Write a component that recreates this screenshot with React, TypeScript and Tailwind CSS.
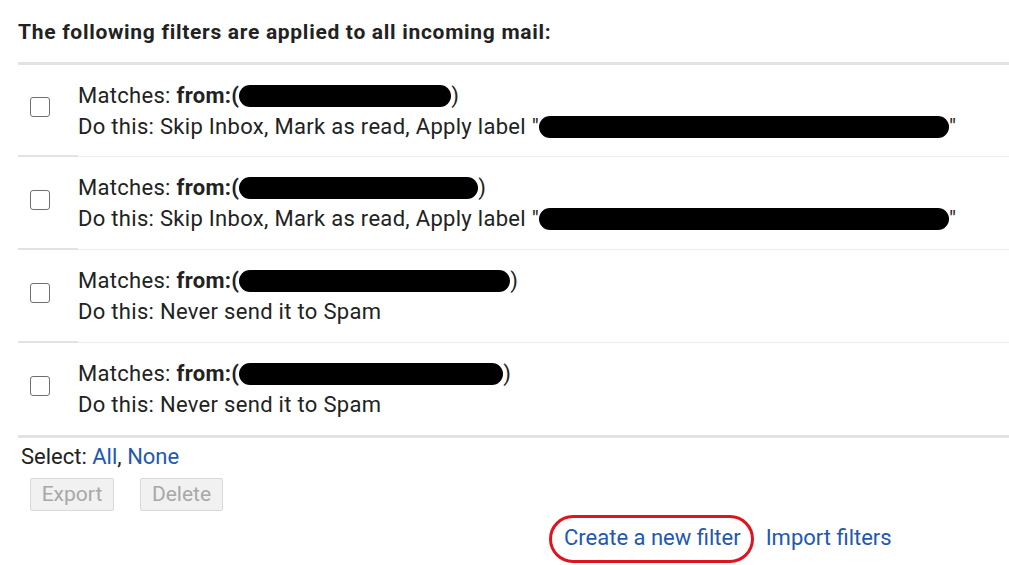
import React from 'react';

type Filter = {
  fromWidth: number;
  action: string;
  labelWidth?: number;
  height: string;
};

const filters: Filter[] = [
  { fromWidth: 212, action: 'Skip Inbox, Mark as read, Apply label "', labelWidth: 410, height: 'h-[92px]' },
  { fromWidth: 239, action: 'Skip Inbox, Mark as read, Apply label "', labelWidth: 410, height: 'h-[93px]' },
  { fromWidth: 271, action: 'Never send it to Spam', height: 'h-[93px]' },
  { fromWidth: 264, action: 'Never send it to Spam', height: 'h-[92px]' },
];

// blacked-out address / label
function Redacted({ width }: { width: number }) {
  return (
    <span
      className="inline-block h-[22px] bg-black rounded-[11px] align-[-4px]"
      style={{ width }}
    />
  );
}

function FilterRow({ filter, last }: { filter: Filter; last: boolean }) {
  return (
    <div className={`flex ${filter.height}`}>
      <div
        className={
          last
            ? 'w-[60px] flex items-center pl-[12px] pb-[6px]'
            : 'w-[60px] flex items-center pl-[12px] pb-[6px] border-b-2 border-[#e2e2e2]'
        }
      >
        <span className="block w-[20px] h-[20px] rounded-[3px] border-[1.5px] border-[#6f6f6f] bg-white" />
      </div>
      <div
        className={
          last
            ? 'flex-1 flex flex-col justify-center leading-[31px] tracking-[0.3px]'
            : 'flex-1 flex flex-col justify-center leading-[31px] tracking-[0.3px] border-b border-[#ececec]'
        }
      >
        <div className="whitespace-nowrap">
          Matches: <b className="font-bold">from:(</b>
          <Redacted width={filter.fromWidth} />)
        </div>
        <div className="whitespace-nowrap">
          Do this: {filter.action}
          {filter.labelWidth && (
            <>
              <Redacted width={filter.labelWidth} />"
            </>
          )}
        </div>
      </div>
    </div>
  );
}

export default function App() {
  return (
    <div
      className="w-[1009px] h-[565px] bg-white text-[#222] text-[22px] overflow-hidden"
      style={{ fontFamily: 'Roboto, "Liberation Sans", sans-serif' }}
    >
      {/* Heading */}
      <div className="h-[62px] pl-[18px] pt-[17px] text-[21px] font-bold tracking-[0.7px] leading-[30px] whitespace-nowrap">
        The following filters are applied to all incoming mail:
      </div>

      {/* Filter list */}
      <div className="ml-[18px] border-t-[3px] border-b-[3px] border-[#e3e3e3]">
        {filters.map((f, i) => (
          <FilterRow key={i} filter={f} last={i === filters.length - 1} />
        ))}
      </div>

      {/* Select */}
      <div className="pl-[21px] pt-[4px] leading-[30px]">
        Select: <span className="text-[#2258b0]">All</span>,{' '}
        <span className="text-[#2258b0]">None</span>
      </div>

      {/* Actions */}
      <div className="flex gap-[26px] pl-[30px] pt-[6px]">
        <button className="w-[84px] h-[33px] bg-[#f1f1f1] border border-[#d9d9d9] rounded-[2px] text-[#a8a8a8] text-[21px]">
          Export
        </button>
        <button className="w-[83px] h-[33px] bg-[#f1f1f1] border border-[#d9d9d9] rounded-[2px] text-[#a8a8a8] text-[21px]">
          Delete
        </button>
      </div>

      {/* Bottom links */}
      <div className="flex items-center pl-[564px] pt-[12px] text-[#2258b0] leading-[30px]">
        <span className="relative whitespace-nowrap">
          Create a new filter
          <span className="absolute left-[-15px] right-[-13px] top-[-8px] bottom-[-10px] border-[3px] border-[#e0141e] rounded-[24px] pointer-events-none" />
        </span>
        <span className="ml-[25px] whitespace-nowrap">Import filters</span>
      </div>
    </div>
  );
}
